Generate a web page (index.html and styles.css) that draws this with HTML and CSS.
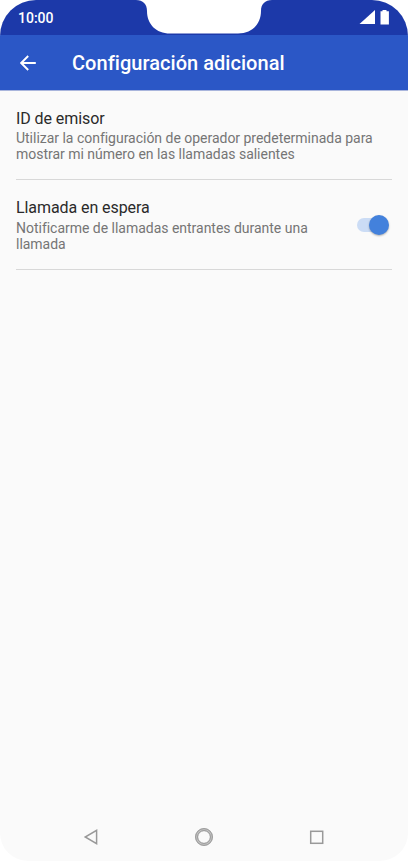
FILE: index.html
```
<!DOCTYPE html>
<html lang="es">
<head>
    <meta charset="UTF-8">
    <meta name="viewport" content="width=device-width, initial-scale=1.0">
    <title>Configuración adicional</title>
    <link rel="stylesheet" href="styles.css">
</head>
<body>
    <div class="screen">
        <div class="status-bar">
            <span class="clock">10:00</span>
            <svg class="notch" width="136" height="34" viewBox="0 0 136 34">
                <path d="M0 0C7 0 11 4 11 11C11 24 20 33.5 34 33.5H102C116 33.5 125 24 125 11C125 4 129 0 136 0Z" fill="#fff"/>
            </svg>
            <svg class="status-icons" width="31" height="16" viewBox="0 0 31 16">
                <path d="M0.5 15L16 1V15Z" fill="#fff"/>
                <path d="M23.5 1H27.5V2.2H29.9V15.4H21.5V2.2H23.5Z" fill="#fff"/>
            </svg>
        </div>

        <header class="app-bar">
            <svg class="back" width="16" height="16" viewBox="0 0 16 16">
                <path d="M15.8 8H1.5M8.2 1L1.2 8L8.2 15" fill="none" stroke="#fff" stroke-width="1.9"/>
            </svg>
            <h1>Configuración adicional</h1>
        </header>

        <main class="settings">
            <div class="item">
                <div class="text">
                    <h2>ID de emisor</h2>
                    <p>Utilizar la configuración de operador predeterminada para mostrar mi número en las llamadas salientes</p>
                </div>
            </div>
            <div class="item">
                <div class="text narrow">
                    <h2>Llamada en espera</h2>
                    <p>Notificarme de llamadas entrantes durante una llamada</p>
                </div>
                <div class="switch"><span class="thumb"></span></div>
            </div>
        </main>

        <nav class="nav-bar">
            <svg width="20" height="20" viewBox="0 0 20 20">
                <path d="M15.6 3.3V16.7L4.2 10Z" fill="none" stroke="#999" stroke-width="1.5"/>
            </svg>
            <svg width="20" height="20" viewBox="0 0 20 20">
                <circle cx="10" cy="10" r="7.5" fill="none" stroke="#c2c2c2" stroke-width="3"/>
                <circle cx="10" cy="10" r="8.4" fill="none" stroke="#999" stroke-width="1"/>
                <circle cx="10" cy="10" r="6.4" fill="none" stroke="#999" stroke-width="1"/>
            </svg>
            <svg width="20" height="20" viewBox="0 0 20 20">
                <rect x="3.7" y="4.3" width="12" height="12" fill="none" stroke="#999" stroke-width="1.5"/>
            </svg>
        </nav>
    </div>
</body>
</html>
```
FILE: styles.css
```
* {
    box-sizing: border-box;
}
body {
    margin: 0;
    background-color: #fff;
    font-family: Roboto, sans-serif;
}
h1, h2, p {
    margin: 0;
}
.screen {
    display: flex;
    flex-direction: column;
    height: 861px;
    background-color: #fafafa;
    border-radius: 36px 36px 28px 28px;
    overflow: hidden;
}
.status-bar {
    display: grid;
    grid-template-columns: 136px 136px 136px;
    height: 35px;
    background-color: #1c39a9;
}
.clock {
    padding: 10px 0 0 18px;
    color: #fff;
    font-size: 14px;
    font-weight: 500;
    line-height: 16px;
}
.status-icons {
    margin: 9px 0 0 87px;
}
.app-bar {
    display: flex;
    align-items: center;
    height: 56px;
    padding: 0 20px;
    background-color: #2b57c6;
    border-bottom: 1px solid #a9b5dc;
    color: #fff;
}
.app-bar h1 {
    margin-left: 36px;
    font-size: 20px;
    font-weight: 500;
    letter-spacing: 0.04px;
    line-height: 24px;
}
.settings {
    flex: 1;
    padding: 0 16px;
}
.item {
    display: flex;
    justify-content: space-between;
    height: 90px;
    padding-top: 18px;
    border-bottom: 1px solid #d8d8d8;
}
.item:first-child {
    height: 89px;
}
.narrow {
    width: 310px;
}
.item h2 {
    margin-bottom: 1px;
    color: #2a2a2a;
    font-size: 16px;
    font-weight: 400;
    letter-spacing: -0.08px;
    line-height: 20px;
}
.item p {
    color: #757575;
    font-size: 14px;
    letter-spacing: -0.02px;
    line-height: 16px;
}
.item:last-child h2 {
    margin-bottom: 2px;
}
.switch {
    display: flex;
    align-items: center;
    justify-content: flex-end;
    width: 29px;
    height: 14px;
    margin: 19.5px 6px 0 0;
    border-radius: 7px;
    background-color: #cbdcf5;
}
.thumb {
    flex: none;
    width: 20px;
    height: 20px;
    margin-right: -3px;
    border-radius: 50%;
    background-color: #4381dc;
    box-shadow: 0 1px 2px rgba(0,0,0,0.3);
}
.nav-bar {
    display: flex;
    align-items: center;
    justify-content: space-between;
    height: 48px;
    padding: 0 81px;
}
```
